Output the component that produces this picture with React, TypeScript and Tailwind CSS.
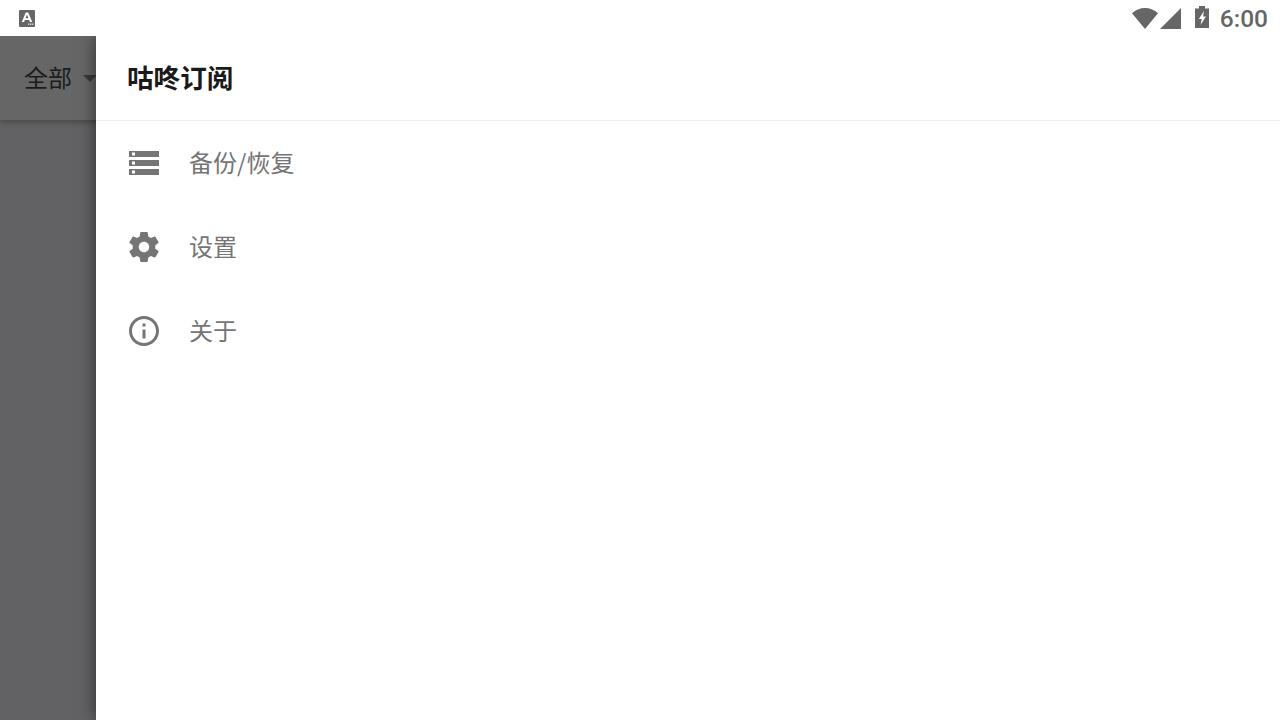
const cjk = "font-['Noto_Sans_CJK_SC','Noto_Sans',sans-serif]";

function Row({ label, d }: { label: string; d: string }) {
  return (
    <div className="flex h-[84px] items-center pl-[30px]">
      <svg viewBox="0 0 24 24" className="h-9 w-9 shrink-0 fill-[#757575]">
        <path d={d} />
      </svg>
      <span className={`mb-[2px] ml-[27px] text-[24px] leading-9 text-[#757575] ${cjk}`}>{label}</span>
    </div>
  );
}

export default function App() {
  return (
    <div className="flex h-[720px] w-[1280px] flex-col overflow-hidden bg-white">
      <div className="relative z-10 flex h-9 shrink-0 items-center bg-white pl-[19px] pr-3">
        <svg viewBox="0 0 16 17" className="h-[17px] w-4">
          <rect width="16" height="17" rx="1" fill="#666" />
          <path d="M2.800 12 6.800 2.500h2.400l4 9.500h-2.300l-.7-1.900H5.800l-.7 1.900zM6.500 8.300h3L8 4.600z" fill="#fff" />
          <rect x="9" y="13.500" width="1.400" height="1.400" fill="#ddd" />
          <rect x="11" y="13.500" width="1.400" height="1.400" fill="#ddd" />
          <rect x="13" y="13.500" width="1.400" height="1.400" fill="#ddd" />
        </svg>
        <div className="ml-auto flex items-center">
          <svg viewBox="0 0 26 21" className="h-[21px] w-[26px]">
            <path d="M0 5.200C3.600 2 8 0 13 0s9.400 2 13 5.200L13 21z" fill="#666" />
          </svg>
          <svg viewBox="0 0 21 21" className="ml-[2px] h-[21px] w-[21px]">
            <path d="M0 21 21 0v21z" fill="#666" />
          </svg>
          <svg viewBox="0 0 14 22" className="mb-[2px] ml-[14px] h-[22px] w-[14px]">
            <path d="M4 0h6v2.500h4V22H0V2.500h4z" fill="#666" />
            <path d="M9 5 3.800 13h3l-1.400 6L11 10.500H8z" fill="#fff" />
          </svg>
          <span className="ml-[11px] mt-[2px] font-['Roboto',sans-serif] text-[24.500px] font-medium leading-9 text-[#666]">6:00</span>
        </div>
      </div>
      <div className="relative flex-1 bg-[#626264]">
        <div className="flex h-[84px] items-center bg-[#666666] pl-6 shadow-[0_2px_6px_rgba(0,0,0,0.3)]">
          <span className={`mb-[2px] text-[24px] leading-9 text-[#1c1c1c] ${cjk}`}>全部</span>
          <svg viewBox="0 0 14 7" className="ml-[11px] h-[7px] w-[14px]">
            <path d="M0 0h14L7 7z" fill="#3a3a3a" />
          </svg>
        </div>
        <div className="absolute inset-y-0 left-[96px] right-0 bg-white shadow-[0_0_16px_rgba(0,0,0,0.55)]">
          <div className="flex h-[85px] items-center border-b border-[#eeeeee] pl-[31px]">
            <span className={`mb-[2px] text-[26.600px] font-bold leading-9 text-[#1a1a1a] ${cjk}`}>咕咚订阅</span>
          </div>
          <Row label="备份/恢复" d="M2 20h20v-4H2v4zm2-3h2v2H4v-2zM2 4v4h20V4H2zm4 3H4V5h2v2zm-4 7h20v-4H2v4zm2-3h2v2H4v-2z" />
          <Row label="设置" d="M19.430 12.980c.04-.32.07-.64.07-.98s-.03-.66-.07-.98l2.110-1.650c.19-.15.24-.42.12-.64l-2-3.460c-.12-.22-.39-.3-.61-.22l-2.490 1c-.52-.4-1.080-.73-1.690-.98l-.38-2.650C14.460 2.180 14.250 2 14 2h-4c-.25 0-.46.18-.49.42l-.38 2.650c-.61.25-1.170.59-1.690.98l-2.490-1c-.23-.09-.49 0-.61.22l-2 3.460c-.13.22-.07.49.12.64l2.110 1.650c-.04.32-.07.65-.07.98s.03.66.07.98l-2.110 1.650c-.19.15-.24.42-.12.64l2 3.460c.12.22.39.3.61.22l2.490-1c.52.4 1.080.73 1.690.98l.38 2.650c.03.24.24.42.49.42h4c.25 0 .46-.18.49-.42l.38-2.650c.61-.25 1.170-.59 1.690-.98l2.490 1c.23.09.49 0 .61-.22l2-3.460c.12-.22.07-.49-.12-.64l-2.110-1.650zM12 15.500c-1.930 0-3.500-1.570-3.500-3.500s1.570-3.500 3.500-3.500 3.500 1.570 3.500 3.500-1.570 3.500-3.500 3.500z" />
          <Row label="关于" d="M11 7h2v2h-2zm0 4h2v6h-2zm1-9C6.480 2 2 6.480 2 12s4.480 10 10 10 10-4.480 10-10S17.520 2 12 2zm0 18c-4.410 0-8-3.590-8-8s3.590-8 8-8 8 3.590 8 8-3.590 8-8 8z" />
        </div>
      </div>
    </div>
  );
}
